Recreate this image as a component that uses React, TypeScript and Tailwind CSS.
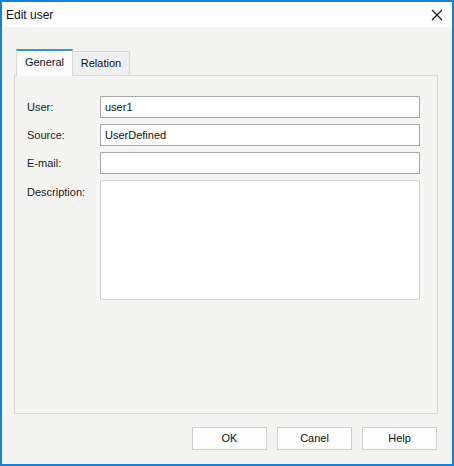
import React from "react";

const font = { fontFamily: '"Liberation Sans", Arial, sans-serif' };

function Field({ label, value }: { label: string; value?: string }) {
  return (
    <div className="flex items-center h-[22px]">
      <div className="w-[73px] text-[11px] text-[#1a1a1a]">{label}</div>
      <div className="w-[320px] h-[22px] border border-[#a9a9a9] bg-[#fdfefd] flex items-center px-[4px] text-[11px] text-[#111]">
        {value}
      </div>
    </div>
  );
}

function Button({ children }: { children: React.ReactNode }) {
  return (
    <button className="w-[75px] h-[23px] border border-[#cfcfcf] bg-[#fdfdfd] text-[11px] text-[#111] flex items-center justify-center">
      {children}
    </button>
  );
}

export default function App() {
  return (
    <div
      className="w-[454px] h-[466px] border-2 border-[#1a7fd5] flex flex-col bg-[#f3f3f2]"
      style={font}
    >
      {/* title bar */}
      <div className="h-[25px] bg-white flex items-center justify-between pl-[4px] pr-[9px]">
        <span className="text-[12px] text-[#111]">Edit user</span>
        <svg width="12" height="12" viewBox="0 0 12 12" className="mt-[1px]">
          <path d="M1 1 L11 11 M11 1 L1 11" stroke="#111" strokeWidth="1.1" />
        </svg>
      </div>

      {/* body */}
      <div className="flex-1 flex flex-col pt-[22px] pl-[12px] pr-[14px]">
        {/* tabs */}
        <div className="flex items-end h-[26px] pl-[2px]">
          <div className="h-[27px] w-[57px] -mb-px relative z-10 bg-[#fbfbfb] border-t-2 border-t-[#3b95d6] border-l border-r border-[#d9d9d9] flex items-center justify-center text-[11px] text-[#111] pb-[2px]">
            General
          </div>
          <div className="h-[24px] w-[57px] bg-[#f0f0f0] border-t border-r border-[#d9d9d9] flex items-center justify-center text-[11px] text-[#111]">
            Relation
          </div>
        </div>

        {/* panel */}
        <div className="h-[339px] w-[424px] border border-[#d9d9d9] bg-[#f4f4f3] pt-[20px] pl-[12px] flex flex-col gap-[6px]">
          <Field label="User:" value="user1" />
          <Field label="Source:" value="UserDefined" />
          <Field label="E-mail:" />
          <div className="flex items-start">
            <div className="w-[73px] text-[11px] text-[#1a1a1a] pt-[4px]">Description:</div>
            <div className="w-[320px] h-[120px] border border-[#d0d0d0] bg-[#fdfefd]" />
          </div>
        </div>

        {/* buttons */}
        <div className="flex justify-end gap-[10px] mt-[13px] pr-[1px]">
          <Button>OK</Button>
          <Button>Canel</Button>
          <Button>Help</Button>
        </div>
      </div>
    </div>
  );
}
